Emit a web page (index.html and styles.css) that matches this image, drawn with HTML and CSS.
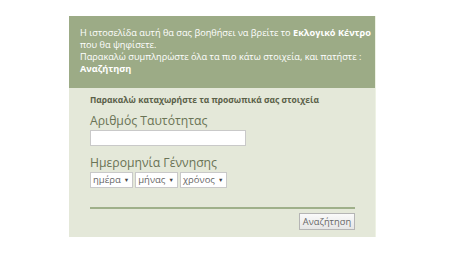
FILE: index.html
```html
<!DOCTYPE html>
<html>
<head>
<meta charset="utf-8">
<link rel="stylesheet" href="styles.css">
</head>
<body>
<div class="wrap">
  <div class="intro">
    Η ιστοσελίδα αυτή θα σας βοηθήσει να βρείτε το <b>Εκλογικό Κέντρο</b><br>
    που θα ψηφίσετε.<br>
    Παρακαλώ συμπληρώστε όλα τα πιο κάτω στοιχεία, και πατήστε :<br>
    <b>Αναζήτηση</b>
  </div>
  <div class="panel">
    <div class="heading">Παρακαλώ καταχωρήστε τα προσωπικά σας στοιχεία</div>
    <div class="label">Αριθμός Ταυτότητας</div>
    <input class="idinput" type="text">
    <div class="label label2">Ημερομηνία Γέννησης</div>
    <div class="selects">
      <span class="sel">ημέρα <i>▼</i></span>
      <span class="sel">μήνας <i>▼</i></span>
      <span class="sel">χρόνος <i>▼</i></span>
    </div>
    <div class="rule"></div>
    <div class="actions"><button class="btn">Αναζήτηση</button></div>
  </div>
</div>
</body>
</html>
```
FILE: styles.css
```css
html, body { margin: 0; padding: 0; background: #fff; }
body { font-family: "Open Sans", "Noto Sans", sans-serif; }
.wrap { width: 306px; margin: 16px 0 0 69px; border-right: 1px solid #eef2e4; }
.intro {
  box-sizing: border-box;
  background: #9cab86;
  color: #fff;
  font-size: 9.2px;
  line-height: 12px;
  padding: 11px 6px 0 11px;
  height: 72px;
  white-space: nowrap;
}
.intro b { font-weight: 700; }
.panel {
  box-sizing: border-box;
  background: #e4e8d9;
  padding: 5px 21px 0 21px;
  height: 149px;
}
.heading { font-size: 8.5px; font-weight: 700; color: #5a6048; line-height: 13px; }
.label { font-size: 12.2px; color: #6a7355; margin-top: 8px; line-height: 14px; }
.label2 { margin-top: 10px; }
.idinput {
  display: block; box-sizing: border-box;
  width: 156px; height: 16px; margin: 2px 0 0 0;
  border: 1px solid #c9c9c9; background: #fff; padding: 0;
}
.selects { display: flex; gap: 2px; margin-top: 2px; }
.sel {
  box-sizing: border-box; height: 16px; background: #fff;
  border: 1px solid #c9c9c9; font-size: 9.5px; color: #666;
  line-height: 14px; padding: 0 3px 0 2px; display: flex; align-items: center; gap: 3px;
}
.sel i { font-style: normal; font-size: 5.5px; color: #444; }
.rule { height: 2px; background: #9fb08a; margin-top: 19px; width: 265px; }
.actions { display: flex; justify-content: flex-end; width: 265px; margin-top: 4px; }
.btn {
  font-family: inherit; font-size: 9.3px; color: #666;
  height: 17px; width: 56px; padding: 0;
  border: 1px solid #b5b5b5; background: linear-gradient(#fafafa, #e6e6e6);
}
```
